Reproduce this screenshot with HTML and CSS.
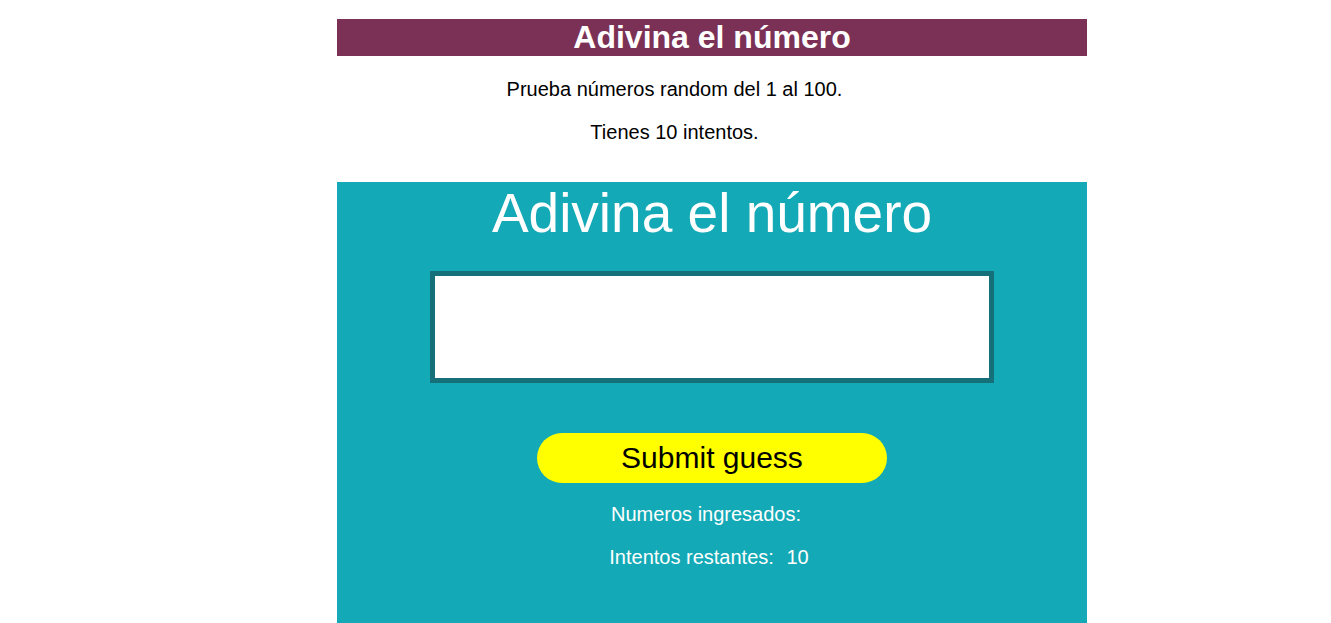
FILE: index.html
```html
<!DOCTYPE html>
<html lang="es">
<head>
<meta charset="utf-8">
<title>Adivina el número</title>
<link rel="stylesheet" href="styles.css">
</head>
<body>
<div class="page">
  <h1 class="banner">Adivina el número</h1>
  <div class="intro">
    <p>Prueba números random del 1 al 100.</p>
    <p>Tienes 10 intentos.</p>
  </div>
  <section class="game">
    <h2 class="game-title">Adivina el número</h2>
    <input class="guess-field" type="text" aria-label="Número">
    <button class="guess-submit" type="button">Submit guess</button>
    <p class="info">Numeros ingresados:<span class="guesses"></span></p>
    <p class="info">Intentos restantes: <span class="remaining">10</span></p>
  </section>
</div>
</body>
</html>
```
FILE: styles.css
```css
html, body {
  margin: 0;
  padding: 0;
  background: #ffffff;
}

body {
  font-family: "Liberation Sans", Arial, sans-serif;
}

.page {
  width: 750px;
  margin: 0 0 0 337px;
  padding-top: 19px;
}

.banner {
  margin: 0;
  background: #7b3155;
  color: #ffffff;
  font-size: 32px;
  font-weight: bold;
  line-height: 37px;
  text-align: center;
}

.intro {
  width: 90%;
  text-align: center;
  font-size: 20px;
  color: #000000;
  padding: 22px 0 38px;
}

.intro p {
  margin: 0 0 20px;
  line-height: 23px;
}

.intro p:last-child {
  margin-bottom: 0;
}

.game {
  background: #13a9b6;
  color: #ffffff;
  text-align: center;
  padding-bottom: 100px;
}

.game-title {
  margin: 0;
  font-size: 55px;
  font-weight: normal;
  line-height: 63px;
}

.guess-field {
  display: block;
  box-sizing: border-box;
  width: 564px;
  height: 112px;
  margin: 26px auto 0;
  border: 5px solid #167079;
  background: #ffffff;
  font-size: 30px;
  padding: 0 10px;
  outline: none;
}

.guess-submit {
  display: block;
  width: 350px;
  height: 50px;
  margin: 50px auto 0;
  border: none;
  border-radius: 25px;
  background: #ffff00;
  color: #000000;
  font-family: "Liberation Sans", Arial, sans-serif;
  font-size: 30px;
  padding: 0;
}

.info {
  font-size: 20px;
  line-height: 23px;
  margin: 20px 0 0;
}

.guesses {
  display: inline-block;
  width: 12px;
}

.remaining {
  display: inline-block;
  padding: 0 6px 0 7px;
}
```
